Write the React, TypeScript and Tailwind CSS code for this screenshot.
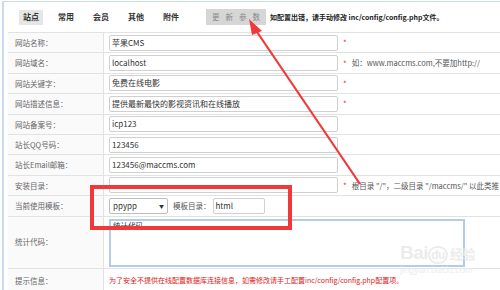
import React from "react";

const font = "font-['Noto_Sans_CJK_SC','Liberation_Sans',sans-serif]";

const TABS = ["站点", "常用", "会员", "其他", "附件"];

type Row = { label: string; value: string; req?: boolean; hint?: string };

const ROWS: Row[] = [
  { label: "网站名称：", value: "苹果CMS", req: true },
  { label: "网站域名：", value: "localhost", req: true, hint: "如：www.maccms.com,不要加http://" },
  { label: "网站关键字：", value: "免费在线电影", req: true },
  { label: "网站描述信息：", value: "提供最新最快的影视资讯和在线播放", req: true },
  { label: "网站备案号：", value: "icp123" },
  { label: "站长QQ号码：", value: "123456" },
  { label: "站长Email邮箱：", value: "123456@maccms.com" },
  { label: "安装目录：", value: "", req: true, hint: "根目录 \"/\"，二级目录 \"/maccms/\" 以此类推" },
];

function Label({ children }: { children: React.ReactNode }) {
  return (
    <div className="w-[96px] shrink-0 border-r border-[#e2e2e2] bg-[#fafafa] pl-[7px] flex items-center text-[7.5px] text-[#666]">
      {children}
    </div>
  );
}

function Input({ value, w = "w-[229px]" }: { value: string; w?: string }) {
  return (
    <div className={`${w} h-[16px] border border-[#d0d0d0] rounded-[2px] bg-white px-[2px] flex items-center text-[8px] text-[#333] leading-none whitespace-nowrap overflow-hidden`}>
      {value}
    </div>
  );
}

export default function App() {
  return (
    <div className={`${font} relative w-[500px] h-[290px] overflow-hidden bg-white`}>
      <div className="absolute inset-0 bg-[radial-gradient(#e6e6e6_0.6px,transparent_0.7px)] bg-[length:4px_4px]" />
      <div className="relative h-full border-t border-l-2 border-[#c9dbef] ml-[2px] mt-[1px] pl-[4px]">
        {/* tab bar */}
        <div className="h-[30px] flex items-center">
          <div className="flex items-center ml-[11px] gap-[11px]">
            {TABS.map((t, i) => (
              <div key={t} className={`h-[15px] w-[24px] flex items-center justify-center text-[8px] font-bold text-[#333] ${i === 0 ? "bg-[#e6e6e6]" : ""}`}>
                {t}
              </div>
            ))}
          </div>
          <div className="ml-[23px] h-[16px] w-[60px] bg-[#d6d6d6] flex items-center justify-around px-[3px] text-[7.5px] text-[#888]">
            <span>更</span><span>新</span><span>参</span><span>数</span>
          </div>
          <div className="ml-[4px] text-[7px] font-bold text-[#222] whitespace-nowrap">
            如配置出错，请手动修改 inc/config/config.php文件。
          </div>
        </div>

        {/* form table */}
        <div className="border-t border-[#e2e2e2] w-[520px]">
          {ROWS.map((r) => (
            <div key={r.label} className="h-[20.4px] flex border-b border-[#e2e2e2]">
              <Label>{r.label}</Label>
              <div className="flex items-center pl-[5px] whitespace-nowrap">
                <Input value={r.value} />
                {r.req && <span className="ml-[5px] text-[8px] text-[#e33] mt-[1px]">*</span>}
                {r.hint && <span className="ml-[5px] text-[7.5px] text-[#555]">{r.hint}</span>}
              </div>
            </div>
          ))}

          {/* template row */}
          <div className="h-[20.4px] flex border-b border-[#e2e2e2]">
            <Label>当前使用模板：</Label>
            <div className="flex items-center pl-[5px] whitespace-nowrap">
              <div className="w-[59px] h-[16px] border border-[#bdbdbd] rounded-[2px] bg-white px-[3px] flex items-center justify-between text-[8px] text-[#333]">
                <span>ppypp</span>
                <span className="text-[5px] text-[#333]">▼</span>
              </div>
              <span className="ml-[5px] mr-[2px] text-[7.5px] text-[#555]">模板目录：</span>
              <Input value="html" w="w-[52px]" />
            </div>
          </div>

          {/* stats code */}
          <div className="h-[52px] flex border-b border-[#e2e2e2]">
            <Label>统计代码：</Label>
            <div className="pl-[5px] pt-[2px]">
              <div className="w-[356px] h-[48px] border-2 border-[#b3cde8] bg-white px-[2px] text-[7.5px] leading-[10px] text-[#333]">
                统计代码
              </div>
            </div>
          </div>

          {/* tip row */}
          <div className="h-[24px] flex">
            <Label>提示信息：</Label>
            <div className="flex items-center pl-[5px] text-[7px] text-[#e02020] whitespace-nowrap">
              为了安全不提供在线配置数据库连接信息，如需修改请手工配置inc/config/config.php配置项。
            </div>
          </div>
        </div>
      </div>

      {/* watermark */}
      <div className="absolute left-[400px] top-[243px] text-[#ececec] font-['Liberation_Sans',sans-serif] leading-none pointer-events-none">
        <div className="text-[19px] font-bold tracking-tight">Bai<span className="text-[12px] border-2 border-[#ececec] rounded-full px-[1px]">du</span><span className="text-[13px] ml-[2px] font-['Noto_Sans_CJK_SC',sans-serif]">经验</span></div>
        <div className="text-[9px] mt-[4px]">jingyan.baidu.com</div>
      </div>

      {/* annotation: red box */}
      <div className="absolute left-[90px] top-[185px] w-[202px] h-[45px] border-[4px] border-[#f0393a]" />

      {/* annotation: arrow */}
      <svg className="absolute inset-0 pointer-events-none" width="500" height="290" viewBox="0 0 500 290">
        <line x1="360" y1="184" x2="253" y2="26" stroke="#f0393a" strokeWidth="2.2" />
        <polygon points="249,19 262,31 252,35" fill="#f0393a" />
      </svg>
    </div>
  );
}
